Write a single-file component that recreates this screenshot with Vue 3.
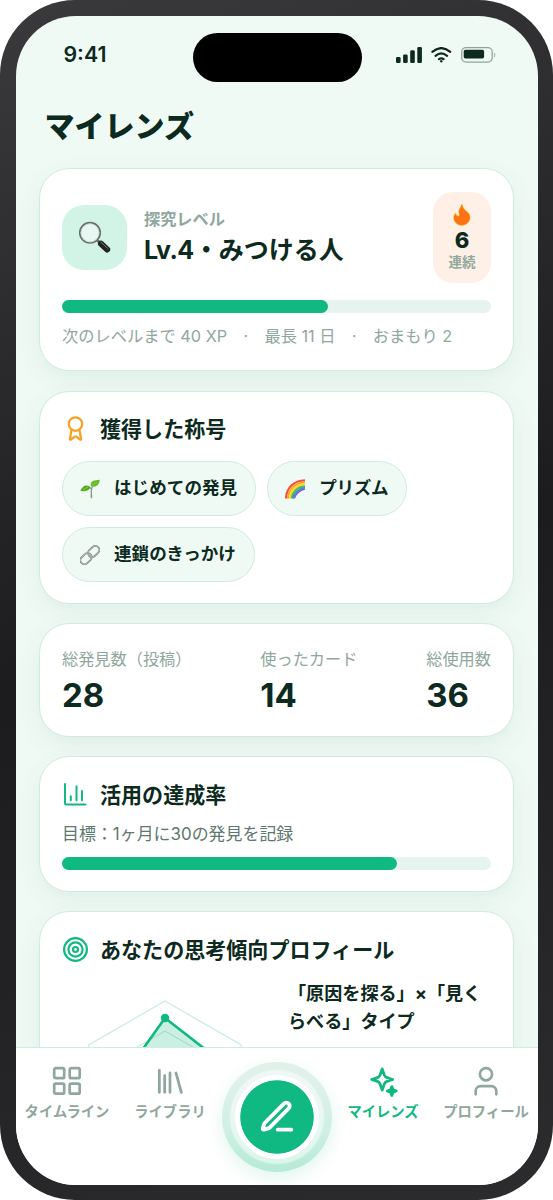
<script setup>
const stats = [
  { label: '総発見数（投稿）', value: 28 },
  { label: '使ったカード', value: 14 },
  { label: '総使用数', value: 36 },
]
const levelProgress = 62
const goalProgress = 78
</script>

<template>
  <div class="phone">
    <div class="screen">
      <header class="status">
        <span class="time">9:41</span>
        <div class="island"></div>
        <div class="indicators">
          <svg class="signal" width="27" height="16" viewBox="0 0 27 16" fill="#0c2a20">
            <rect x="0" y="10" width="4.6" height="6" rx="1.3" />
            <rect x="7.1" y="7.4" width="4.6" height="8.6" rx="1.3" />
            <rect x="14.2" y="3.2" width="4.6" height="12.8" rx="1.3" />
            <rect x="21.3" y="0" width="4.6" height="16" rx="1.3" />
          </svg>
          <svg class="wifi" width="21" height="16" viewBox="0 0 21 16" fill="none" stroke="#0c2a20" stroke-width="2.1" stroke-linecap="round">
            <path d="M1.3 4.9Q10.3 -2.8 19.3 4.9" />
            <path d="M4.5 8.9Q10.3 4 16.1 8.9" />
            <path d="M7.9 12.2Q10.3 10.4 12.7 12.2" />
            <circle cx="10.3" cy="14.3" r="1.2" fill="#0c2a20" stroke="none" />
          </svg>
          <svg class="battery" width="35" height="16" viewBox="0 0 35 16">
            <rect x=".7" y=".7" width="30.5" height="14.4" rx="4.3" fill="none" stroke="#8fa39b" stroke-width="1.3" />
            <rect x="2.7" y="2.7" width="20.4" height="8.8" rx="1.7" fill="#0c2a20" />
            <path d="M33.2 5.5q1 .3 1 1.5v2q0 1.2-1 1.5z" fill="#9cafa7" />
          </svg>
        </div>
      </header>

      <main class="content">
        <h1>マイレンズ</h1>

        <section class="card level">
          <div class="level-row">
            <div class="lens">
              <svg width="34" height="34" viewBox="0 0 34 34">
                <path d="M19.5 19.5l3.5 3.2" stroke="#626866" stroke-width="3" />
                <path d="M23 22.7l6.2 5.8" stroke="#202524" stroke-width="6" stroke-linecap="round" />
                <path d="M22.7 21l7.2 6.5" stroke="#737977" stroke-width="1" stroke-linecap="round" />
                <circle cx="12" cy="11.8" r="10.2" fill="#e9f7f2" stroke="#676f6c" stroke-width="1.7" />
                <circle cx="12" cy="11.8" r="9.1" fill="none" stroke="#c0c9c5" stroke-width=".8" />
              </svg>
            </div>
            <div class="level-text">
              <span class="eyebrow">探究レベル</span>
              <strong><span class="lv">Lv.4</span>・みつける人</strong>
            </div>
            <div class="streak">
              <svg width="18" height="22" viewBox="0 0 18 22">
                <path d="M8.3 0C8 3.5 5.1 5.2 5.5 8.2c.2 1.5 1.2 2.5.5 3.2-1.1 1-2.8-.5-3.1-2.8C1 10.5 .4 11.8 .4 13.6c0 4.6 3.8 8.1 8.4 8.1s8.5-3.5 8.5-8.1C17.3 8.2 12.8 7.2 10.8 4.2 9.900 2.900 10.100.3 8.300 0Z" fill="#ffad20" />
                <path d="M8.500 .8C8.300 4 5.700 5.600 6 8.200c.3 1.700 1.200 2.700.2 3.700-1.400 1.200-3.300 0-3.700-1.900-.9 1.100-1.500 2.200-1.500 3.600 0 4.200 3.500 7.500 7.800 7.500s7.900-3.200 7.900-7.500c0-4.900-4.400-5.900-6.400-9C9.300 3.400 9.400 1.700 8.500 .8Z" fill="#fb7314" />
              </svg>
              <b>6</b>
              <small>連続</small>
            </div>
          </div>
          <div class="bar"><i :style="{ width: levelProgress + '%' }"></i></div>
          <p class="meta"><span>次のレベルまで 40 XP</span><span>·</span><span>最長 11 日</span><span>·</span><span>おまもり 2</span></p>
        </section>

        <section class="card titles">
          <h2>
            <svg width="27" height="27" viewBox="0 0 24 24" fill="none" stroke="#f9a11f" stroke-width="2" stroke-linecap="round" stroke-linejoin="round">
              <circle cx="12" cy="8" r="6" />
              <path d="m15.480 12.890 1.520 8.500a.5.5 0 0 1-.81.470l-3.580-2.690a1 1 0 0 0-1.200 0l-3.590 2.690a.5.5 0 0 1-.81-.47l1.520-8.500" />
            </svg>
            <span>獲得した称号</span>
          </h2>
          <div class="chips">
            <span class="chip">
              <svg width="20" height="20" viewBox="0 0 20 20">
                <path d="M11.400 18.500C11.500 13 10.500 9.500 13 6.500M10.900 9.500Q8.500 6.800 6.500 8" fill="none" stroke="#8a978b" stroke-width="1.300" stroke-linecap="round" />
                <path d="M11 7.300C9.500 2 14 1.200 19.700.8 19.500 5.500 16 9 11 7.300Z" fill="#68b927" />
                <path d="M.3 11.800C3 6 7.800 4.800 10.400 8.800 7.500 12.600 3.500 12.500.3 11.800Z" fill="#55a91d" />
                <path d="M12 6.500 17 3M3 10.500l5-2.300" stroke="#89d044" stroke-width=".9" />
                <path d="M11.500 16.500v2" stroke="#70b63e" stroke-width="1.300" stroke-linecap="round" />
              </svg>
              <span>はじめての発見</span>
            </span>
            <span class="chip">
              <svg width="20" height="20" viewBox="0 0 20 20" fill="none" stroke-width="2.100">
                <path d="M1 19.500C1.500 8.500 9 1.500 20 1.200" stroke="#f44c40" />
                <path d="M3 19.500C3.500 10 10 3.700 20 3.200" stroke="#ffa51f" />
                <path d="M5 19.500C5.500 11.500 11 5.800 20 5.200" stroke="#ffd72b" />
                <path d="M6.800 19.500C7.300 13 12 7.900 20 7.200" stroke="#57bb44" />
                <path d="M8.100 19.500C8.700 14.500 13.500 9.500 20 8.700" stroke="#279bd4" stroke-width="1.700" />
                <path d="M9.400 19.500C10 15.500 14.500 11 20 10" stroke="#8355e6" stroke-width="1.500" />
              </svg>
              <span class="kana">プリズム</span>
            </span>
            <span class="chip">
              <svg width="20" height="20" viewBox="0 0 20 20" fill="none">
                <g transform="rotate(-43 10 10)">
                  <rect x="-1.600" y="6" width="12.500" height="8" rx="4" stroke="#7b8481" stroke-width="1.800" />
                  <rect x="-1.600" y="6" width="12.500" height="8" rx="4" stroke="#c3cbc7" stroke-width=".7" />
                  <rect x="8.800" y="6" width="12.500" height="8" rx="4" stroke="#7b8481" stroke-width="1.800" />
                  <rect x="8.800" y="6" width="12.500" height="8" rx="4" stroke="#c3cbc7" stroke-width=".7" />
                </g>
              </svg>
              <span>連鎖のきっかけ</span>
            </span>
          </div>
        </section>

        <section class="card stats">
          <div v-for="s in stats" :key="s.label">
            <span>{{ s.label }}</span>
            <b>{{ s.value }}</b>
          </div>
        </section>

        <section class="card goal">
          <h2>
            <svg width="27" height="27" viewBox="0 0 27 27" fill="none" stroke="#10b981" stroke-width="2" stroke-linecap="round" stroke-linejoin="round">
              <path d="M3 3v19a1.500 1.500 0 0 0 1.500 1.500H23.500" />
              <path d="M8.800 19.200v-4M14.500 19.200V5.300M20 19.200V10" />
            </svg>
            <span>活用の達成率</span>
          </h2>
          <p>目標：1ヶ月に30の発見を記録</p>
          <div class="bar"><i :style="{ width: goalProgress + '%' }"></i></div>
        </section>

        <section class="card profile">
          <h2>
            <svg width="27" height="27" viewBox="0 0 27 27" fill="none" stroke="#10b981" stroke-width="2.200">
              <circle cx="13.500" cy="13.500" r="11.400" />
              <circle cx="13.500" cy="13.500" r="7.100" />
              <circle cx="13.500" cy="13.500" r="2.500" />
            </svg>
            <span>あなたの思考傾向プロフィール</span>
          </h2>
          <div class="profile-body">
            <svg class="radar" width="206" height="206" viewBox="0 0 206 206">
              <g fill="none" stroke="#ceece0" stroke-width="1.300">
                <polygon points="103,15 179.300,59 179.300,147 103,191 26.700,147 26.700,59" />
                <polygon points="103,45 153.200,74 153.200,132 103,161 52.800,132 52.800,74" />
                <polygon points="103,74 128.100,88.500 128.100,117.500 103,132 77.900,117.500 77.900,88.500" />
              </g>
              <polygon points="103,32 155.400,72.800 146,128 103,150 63,126 67.200,82.300" fill="#10b981" fill-opacity=".22" stroke="#10b981" stroke-width="2.600" stroke-linejoin="round" />
              <circle cx="103" cy="32" r="4.200" fill="#10b981" />
            </svg>
            <p>「原因を探る」×「見くらべる」タイプ</p>
          </div>
        </section>
      </main>

      <nav>
        <a>
          <svg width="32" height="32" viewBox="0 0 32 32" fill="none" stroke="#8fa79d" stroke-width="2.700">
            <rect x="3.200" y="3.200" width="10" height="10" rx="1.500" />
            <rect x="18.700" y="3.200" width="10" height="10" rx="1.500" />
            <rect x="3.200" y="18.700" width="10" height="10" rx="1.500" />
            <rect x="18.700" y="18.700" width="10" height="10" rx="1.500" />
          </svg>
          タイムライン
        </a>
        <a>
          <svg width="32" height="32" viewBox="0 0 24 24" fill="none" stroke="#8fa79d" stroke-width="2.100" stroke-linecap="round">
            <path d="m16.500 6 4 14.500M12 6v14.500M8 8v12.500M4 4v16.500" />
          </svg>
          ライブラリ
        </a>
        <div class="fab-slot">
          <button class="fab">
            <svg width="38" height="38" viewBox="0 0 24 24" fill="none" stroke="#fff" stroke-width="2.450" stroke-linecap="round" stroke-linejoin="round">
              <path d="M12.500 20H21" />
              <path d="M16.376 3.622a1 1 0 0 1 3.002 3.002L7.368 18.635a2 2 0 0 1-.855.506l-2.872.838a.5.5 0 0 1-.62-.62l.838-2.872a2 2 0 0 1 .506-.854z" />
            </svg>
          </button>
        </div>
        <a class="active">
          <svg width="32" height="32" viewBox="0 0 32 32" fill="none" stroke="#10b981" stroke-width="2.800" stroke-linejoin="round">
            <path d="M15.200 4l2.100 5.900q.8 2 2.800 2.700l5.600 1.900-5.600 1.900q-2 .7-2.800 2.700l-2.100 6-2.100-6q-.8-2-2.800-2.700l-5.600-1.900 5.600-1.900q2-.7 2.800-2.700z" />
            <path d="M24.800 21.600l1.200 3 3.200 1.400-3.200 1.400-1.200 3.100-1.200-3.100-3.200-1.400 3.200-1.400z" fill="#10b981" />
          </svg>
          マイレンズ
        </a>
        <a>
          <svg width="32" height="32" viewBox="0 0 32 32" fill="none" stroke="#8fa79d" stroke-width="2.700" stroke-linecap="round">
            <circle cx="16" cy="9.200" r="6.100" />
            <path d="M5.700 29.300v-3.300a4.800 4.800 0 0 1 4.800-4.800h11a4.800 4.800 0 0 1 4.800 4.800v3.300" />
          </svg>
          プロフィール
        </a>
      </nav>
    </div>
  </div>
</template>

<style>
body {
  background: #fff;
}
</style>

<style scoped>
* {
  box-sizing: border-box;
  margin: 0;
}
svg {
  display: block;
  flex: none;
}
.phone {
  width: 553px;
  height: 1200px;
  padding: 15.500px;
  border-radius: 75px;
  background: linear-gradient(160deg, #3a3a3c 0%, #1c1c1e 50%, #2c2c2e 100%);
  font-family: Inter, "Noto Sans CJK JP", sans-serif;
  color: #0c2a20;
}
.screen {
  height: 1169px;
  border-radius: 60px;
  overflow: hidden;
  background: #f0faf5;
  display: flex;
  flex-direction: column;
}
.status {
  height: 78px;
  flex: none;
  display: grid;
  grid-template-columns: 177px 169px 1fr;
  align-items: start;
  padding-top: 17px;
}
.time {
  padding: 9px 0 0 48px;
  font-size: 21.300px;
  line-height: 25px;
  font-weight: 600;
}
.island {
  height: 49px;
  border-radius: 25px;
  background: #000;
}
.indicators {
  display: flex;
  padding: 14px 0 0 34.500px;
}
.wifi {
  margin-left: 8px;
}
.battery {
  margin-left: 9px;
}
.content {
  flex: 1;
  min-height: 0;
  overflow: hidden;
  padding: 0 23.500px;
}
h1 {
  font-size: 30px;
  line-height: 40px;
  font-weight: 800;
  margin: 12.500px 0 22px 5.500px;
}
.card {
  background: #fff;
  border: 1px solid #ceece0;
  border-radius: 30px;
  padding: 23px 22px 22px;
  margin-bottom: 19px;
  box-shadow: 0 8px 24px rgba(6, 78, 59, 0.07);
}
h2 {
  display: flex;
  align-items: center;
  gap: 11px;
  height: 27px;
  font-size: 21.050px;
  font-weight: 700;
  line-height: 27px;
}
h2 span {
  padding-top: 2px;
}
.level {
  height: 203px;
  margin-bottom: 20px;
}
.level-row {
  display: flex;
  align-items: center;
  height: 91px;
}
.lens {
  width: 65px;
  height: 65px;
  border-radius: 22px;
  background: #d1f4e6;
  display: grid;
  place-items: center;
}
.level-text {
  margin-left: 17px;
  flex: 1;
}
.eyebrow {
  display: block;
  font-size: 16.200px;
  line-height: 24px;
  font-weight: 700;
  color: #8fa79d;
}
.level-text strong {
  display: block;
  margin-top: 1px;
  font-size: 25px;
  line-height: 37px;
  font-weight: 700;
}
.lv {
  letter-spacing: -0.5px;
}
.streak {
  width: 58px;
  height: 91px;
  border-radius: 20px;
  background: #fef0e6;
  display: flex;
  flex-direction: column;
  align-items: center;
  padding-top: 12px;
}
.streak b {
  font-size: 22px;
  line-height: 26px;
  margin-top: 1px;
  font-weight: 800;
}
.streak small {
  font-size: 13.500px;
  line-height: 18px;
  font-weight: 700;
  color: #8fa79d;
}
.bar {
  height: 13px;
  border-radius: 7px;
  background: #e6f3ee;
}
.bar i {
  display: block;
  height: 100%;
  border-radius: 7px;
  background: #10b981;
}
.level .bar {
  margin-top: 17px;
}
.meta {
  display: flex;
  gap: 16.300px;
  margin-top: 11px;
  font-size: 16.250px;
  line-height: 24px;
  color: #8fa79d;
  white-space: nowrap;
}
.titles {
  height: 213px;
}
.chips {
  display: flex;
  flex-wrap: wrap;
  gap: 11px;
  margin-top: 18.900px;
}
.chip {
  height: 55px;
  display: flex;
  align-items: center;
  gap: 14px;
  padding: 0 18px 0 17px;
  border: 1px solid #ceece0;
  border-radius: 28px;
  background: #f0faf5;
  font-size: 17.600px;
  line-height: 26px;
  font-weight: 700;
}
.chip > svg {
  position: relative;
  top: 1px;
}
.kana {
  letter-spacing: -0.35px;
}
.stats {
  height: 114px;
  display: flex;
  justify-content: space-between;
}
.stats span {
  display: block;
  font-size: 16.200px;
  line-height: 24px;
  color: #8fa79d;
}
.stats b {
  display: block;
  font-size: 33px;
  line-height: 42px;
  margin-top: 3px;
  font-weight: 700;
}
.goal {
  height: 136px;
}
.goal h2,
.profile h2 {
  position: relative;
  top: 1px;
}
.goal p {
  font-size: 16.950px;
  line-height: 24px;
  margin: 15px 0 11px;
  color: #5d786e;
}
.profile {
  height: 420px;
}
.profile-body {
  display: flex;
  margin-top: 17px;
  gap: 20px;
}
.profile-body p {
  flex: 1;
  font-size: 18.100px;
  line-height: 28px;
  font-weight: 700;
  word-break: break-all;
}
.radar {
  margin-top: 7px;
}
nav {
  height: 138px;
  flex: none;
  display: grid;
  grid-template-columns: 1fr 1fr 110px 1fr 1fr;
  background: #fff;
  border-top: 1px solid #ceece0;
}
nav a {
  display: flex;
  flex-direction: column;
  align-items: center;
  padding-top: 17px;
  font-size: 14.300px;
  line-height: 20px;
  font-weight: 700;
  color: #8fa79d;
  white-space: nowrap;
  gap: 5px;
}
nav a.active {
  color: #10b981;
}
.fab-slot {
  padding-top: 14px;
}
.fab {
  width: 110px;
  height: 110px;
  border: 0;
  border-radius: 50%;
  padding: 0;
  display: grid;
  place-items: center;
  background:
    radial-gradient(circle, #10b981 0 36.300px, #fff 37.100px 41.500px, rgba(255, 255, 255, 0.5) 42.300px 46px, rgba(255, 255, 255, 0) 48px),
    linear-gradient(#e0f1ea 15%, #d0f0e4 60%, #b7ebd7 95%);
  box-shadow: 0 6px 18px rgba(16, 185, 129, 0.13);
}
</style>
